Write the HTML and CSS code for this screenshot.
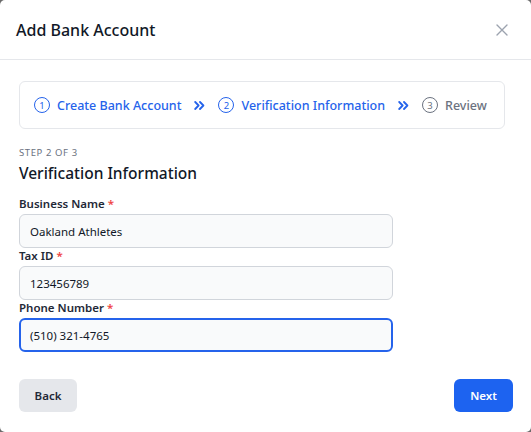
FILE: index.html
```html
<!DOCTYPE html>
<html>
<head>
<meta charset="utf-8">
<link rel="stylesheet" href="styles.css">
</head>
<body>
<div class="modal">
  <div class="header">
    <h1 class="title">Add Bank Account</h1>
    <svg class="close" width="12" height="12" viewBox="0 0 12 12"><path d="M1 1L11 11M11 1L1 11" stroke="#9ca3af" stroke-width="1.4" stroke-linecap="round"/></svg>
  </div>
  <div class="body">
    <div class="stepper">
      <div class="step done"><span class="num">1</span><span class="label">Create Bank Account</span></div>
      <svg class="chev" width="11" height="9" viewBox="0 0 11 9"><path d="M1.2 1L4.6 4.5L1.2 8M6 1L9.4 4.5L6 8" fill="none" stroke="#2563eb" stroke-width="1.8" stroke-linecap="round" stroke-linejoin="round"/></svg>
      <div class="step active"><span class="num">2</span><span class="label">Verification Information</span></div>
      <svg class="chev" width="11" height="9" viewBox="0 0 11 9"><path d="M1.2 1L4.6 4.5L1.2 8M6 1L9.4 4.5L6 8" fill="none" stroke="#2563eb" stroke-width="1.8" stroke-linecap="round" stroke-linejoin="round"/></svg>
      <div class="step todo"><span class="num">3</span><span class="label">Review</span></div>
    </div>
    <div class="eyebrow">STEP 2 OF 3</div>
    <h2 class="section">Verification Information</h2>
    <div class="fields">
      <div class="field">
        <label class="flabel">Business Name <span class="req">*</span></label>
        <div class="input">Oakland Athletes</div>
      </div>
      <div class="field">
        <label class="flabel">Tax ID <span class="req">*</span></label>
        <div class="input">123456789</div>
      </div>
      <div class="field">
        <label class="flabel">Phone Number <span class="req">*</span></label>
        <div class="input focus">(510) 321-4765</div>
      </div>
    </div>
  </div>
  <div class="footer">
    <button class="btn back">Back</button>
    <button class="btn next">Next</button>
  </div>
</div>
</body>
</html>
```
FILE: styles.css
```css
html, body { margin: 0; padding: 0; }
body {
  background: #6b6b6b;
  font-family: "Noto Sans", "Open Sans", sans-serif;
  color: #111827;
  width: 531px;
  height: 432px;
  overflow: hidden;
}
.modal {
  background: #fff;
  width: 531px;
  height: 432px;
  border-radius: 5px;
  box-sizing: border-box;
  display: flex;
  flex-direction: column;
}
.header {
  height: 60px;
  box-sizing: border-box;
  border-bottom: 1px solid #e5e7eb;
  display: flex;
  align-items: center;
  justify-content: space-between;
  padding: 0 23px 0 16px;
}
.title {
  margin: 0;
  font-size: 16px;
  font-weight: 500;
  color: #111827;
}
.body {
  padding: 21px 26px 0 19px;
  flex: 1;
}
.stepper {
  border: 1px solid #e5e7eb;
  border-radius: 6px;
  height: 48px;
  box-sizing: border-box;
  display: flex;
  align-items: center;
  padding: 0 14px;
  gap: 13px;
}
.step {
  display: flex;
  align-items: center;
  gap: 7px;
  font-size: 12.5px;
  font-weight: 500;
  white-space: nowrap;
}
.num {
  width: 16px;
  height: 16px;
  box-sizing: border-box;
  border-radius: 50%;
  border: 1px solid currentColor;
  font-size: 9.5px;
  display: flex;
  align-items: center;
  justify-content: center;
  font-weight: 400;
}
.done, .active { color: #2563eb; }
.todo { color: #6b7280; }
.chev { flex: none; }
.eyebrow {
  margin-top: 17px;
  font-size: 9.5px;
  letter-spacing: 0.6px;
  color: #6b7280;
}
.section {
  margin: 3px 0 0 0;
  font-size: 15.5px;
  font-weight: 500;
  color: #111827;
}
.fields {
  margin-top: 12px;
  width: 374px;
  display: flex;
  flex-direction: column;
}
.field { display: flex; flex-direction: column; gap: 2px; }
.flabel {
  font-size: 11.5px;
  line-height: 16px;
  font-weight: 600;
  color: #1f2937;
}
.req { color: #ef4444; }
.input {
  height: 34px;
  box-sizing: border-box;
  border: 1px solid #d1d5db;
  border-radius: 6px;
  background: #f9fafb;
  font-size: 11.5px;
  color: #111827;
  display: flex;
  align-items: center;
  padding: 0 10px;
}
.input.focus {
  border: 2px solid #2563eb;
  padding: 0 9px;
}
.footer {
  display: flex;
  justify-content: space-between;
  padding: 0 18px 20px 19px;
}
.btn {
  height: 33px;
  border: none;
  border-radius: 6px;
  font-family: inherit;
  font-size: 11.5px;
  font-weight: 600;
}
.back { background: #e5e7eb; color: #1f2937; width: 58px; padding: 0; }
.next { background: #1d63f0; color: #fff; width: 59px; padding: 0; }
```
